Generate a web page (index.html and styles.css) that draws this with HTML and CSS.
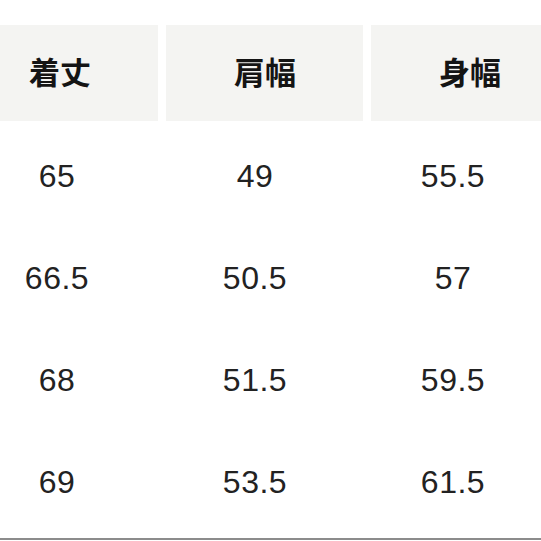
FILE: index.html
```html
<!DOCTYPE html>
<html lang="ja">
<head>
<meta charset="utf-8">
<link rel="stylesheet" href="styles.css">
</head>
<body>
<div class="sheet">
  <div class="head">
    <div class="hcell h1">着丈</div>
    <div class="hcell h2">肩幅</div>
    <div class="hcell h3">身幅</div>
  </div>
  <div class="rows">
    <div class="row"><span>65</span><span>49</span><span>55.5</span></div>
    <div class="row"><span>66.5</span><span>50.5</span><span>57</span></div>
    <div class="row"><span>68</span><span>51.5</span><span>59.5</span></div>
    <div class="row"><span>69</span><span>53.5</span><span>61.5</span></div>
  </div>
  <div class="rule"></div>
</div>
</body>
</html>
```
FILE: styles.css
```css
html, body {
  margin: 0;
  padding: 0;
  background: #ffffff;
}
.sheet {
  width: 541px;
  height: 541px;
  padding-top: 25px;
  box-sizing: border-box;
}
.head {
  display: grid;
  grid-template-columns: 158px 197px 1fr;
  column-gap: 8px;
  height: 96px;
}
.hcell {
  background: #f4f4f2;
  display: flex;
  align-items: center;
  box-sizing: border-box;
  padding-bottom: 6px;
  font-family: "Noto Sans CJK JP", sans-serif;
  font-weight: 700;
  font-size: 31px;
  line-height: 1;
  color: #141414;
}
.h1 { padding-left: 29px; }
.h2 { padding-left: 68px; }
.h3 { padding-left: 68px; }
.rows {
  padding-top: 4px;
}
.row {
  display: grid;
  grid-template-columns: 114px 282px 114px;
  height: 102px;
  align-items: center;
  text-align: center;
  font-family: "Liberation Sans", Arial, sans-serif;
  font-size: 32px;
  line-height: 1;
  letter-spacing: 0.5px;
  color: #222222;
}
.rule {
  margin-top: 5px;
  height: 2px;
  background: #8c8c8c;
}
```
